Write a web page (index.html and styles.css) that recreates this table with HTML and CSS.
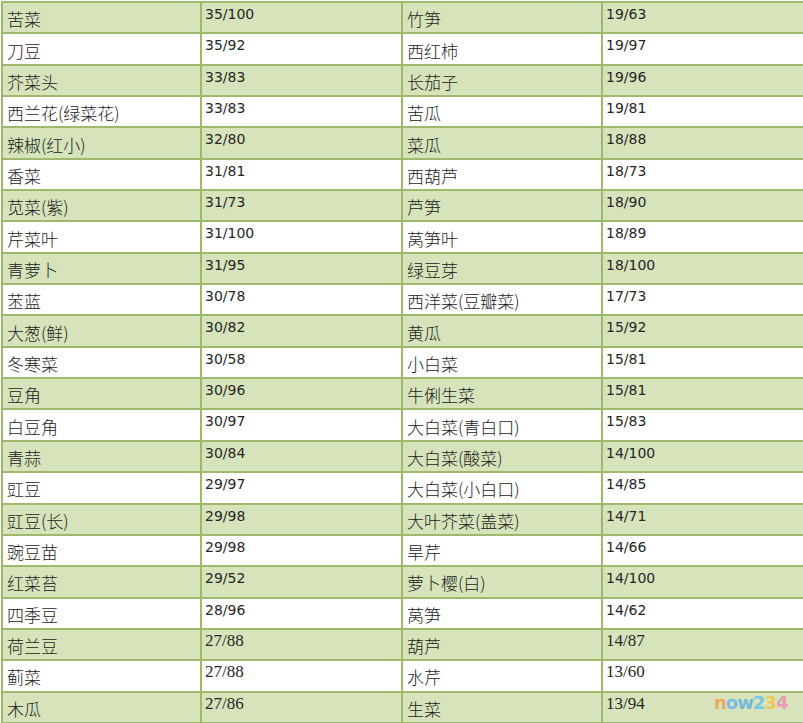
FILE: index.html
```html
<!DOCTYPE html>
<html lang="zh">
<head>
<meta charset="utf-8">
<link rel="stylesheet" href="styles.css">
</head>
<body>
<table class="veg">
<colgroup><col class="c1"><col class="c2"><col class="c3"><col class="c4"></colgroup>
<tbody>
<tr class="g"><td>苦菜</td><td class="n">35/100</td><td>竹笋</td><td class="n">19/63</td></tr>
<tr><td>刀豆</td><td class="n">35/92</td><td>西红柿</td><td class="n">19/97</td></tr>
<tr class="g"><td>芥菜头</td><td class="n">33/83</td><td>长茄子</td><td class="n">19/96</td></tr>
<tr><td>西兰花(绿菜花)</td><td class="n">33/83</td><td>苦瓜</td><td class="n">19/81</td></tr>
<tr class="g"><td>辣椒(红小)</td><td class="n">32/80</td><td>菜瓜</td><td class="n">18/88</td></tr>
<tr><td>香菜</td><td class="n">31/81</td><td>西葫芦</td><td class="n">18/73</td></tr>
<tr class="g"><td>苋菜(紫)</td><td class="n">31/73</td><td>芦笋</td><td class="n">18/90</td></tr>
<tr><td>芹菜叶</td><td class="n">31/100</td><td>莴笋叶</td><td class="n">18/89</td></tr>
<tr class="g"><td>青萝卜</td><td class="n">31/95</td><td>绿豆芽</td><td class="n">18/100</td></tr>
<tr><td>苤蓝</td><td class="n">30/78</td><td>西洋菜(豆瓣菜)</td><td class="n">17/73</td></tr>
<tr class="g"><td>大葱(鲜)</td><td class="n">30/82</td><td>黄瓜</td><td class="n">15/92</td></tr>
<tr><td>冬寒菜</td><td class="n">30/58</td><td>小白菜</td><td class="n">15/81</td></tr>
<tr class="g"><td>豆角</td><td class="n">30/96</td><td>牛俐生菜</td><td class="n">15/81</td></tr>
<tr><td>白豆角</td><td class="n">30/97</td><td>大白菜(青白口)</td><td class="n">15/83</td></tr>
<tr class="g"><td>青蒜</td><td class="n">30/84</td><td>大白菜(酸菜)</td><td class="n">14/100</td></tr>
<tr><td>豇豆</td><td class="n">29/97</td><td>大白菜(小白口)</td><td class="n">14/85</td></tr>
<tr class="g"><td>豇豆(长)</td><td class="n">29/98</td><td>大叶芥菜(盖菜)</td><td class="n">14/71</td></tr>
<tr><td>豌豆苗</td><td class="n">29/98</td><td>旱芹</td><td class="n">14/66</td></tr>
<tr class="g"><td>红菜苔</td><td class="n">29/52</td><td>萝卜樱(白)</td><td class="n">14/100</td></tr>
<tr><td>四季豆</td><td class="n">28/96</td><td>莴笋</td><td class="n">14/62</td></tr>
<tr class="g"><td>荷兰豆</td><td class="n s">27/88</td><td>葫芦</td><td class="n s">14/87</td></tr>
<tr><td>蓟菜</td><td class="n s">27/88</td><td>水芹</td><td class="n s">13/60</td></tr>
<tr class="g"><td>木瓜</td><td class="n s">27/86</td><td>生菜</td><td class="n s">13/94</td></tr>
</tbody>
</table>
<div class="mark"><span class="m1">n</span><span class="m2">o</span><span class="m3">w</span><span class="m4">2</span><span class="m5">3</span><span class="m6">4</span></div>
</body>
</html>
```
FILE: styles.css
```css
html, body {
  margin: 0;
  padding: 0;
  background: #ffffff;
  overflow: hidden;
}
body {
  width: 803px;
  height: 723px;
  position: relative;
}
.veg {
  border-collapse: collapse;
  margin: 1px 0 0 1px;
  width: 806px;
  table-layout: fixed;
  font-family: "Noto Sans CJK SC", "Noto Sans", sans-serif;
  color: #1c1c1c;
}
.c1 { width: 199px; }
.c2 { width: 201px; }
.c3 { width: 200px; }
.c4 { width: 206px; }
.veg tr {
  height: 31.35px;
}
.veg tr.g {
  background: #d6e3bb;
}
.veg td {
  border: 2px solid #9fb96c;
  padding: 3px 3px 0 4px;
  font-size: 17px;
  font-weight: 300;
  line-height: 24px;
  vertical-align: middle;
  white-space: nowrap;
  overflow: hidden;
}
.veg td.n {
  font-family: "DejaVu Sans", Verdana, sans-serif;
  font-size: 14px;
  font-weight: normal;
  vertical-align: top;
  padding-top: 1px;
  padding-left: 3px;
  line-height: 20px;
  color: #262626;
}
.veg td.n.s {
  font-family: "Liberation Serif", serif;
  font-size: 17px;
}
.mark {
  position: absolute;
  left: 714px;
  top: 692px;
  font-family: "DejaVu Sans", sans-serif;
  font-weight: bold;
  font-size: 18px;
  letter-spacing: -1px;
  opacity: 0.85;
}
.m1 { color: #f2a14a; }
.m2 { color: #6cb7e8; }
.m3 { color: #5fb4e0; }
.m4 { color: #67c3ea; }
.m5 { color: #f0c545; }
.m6 { color: #e98fb6; }
```
